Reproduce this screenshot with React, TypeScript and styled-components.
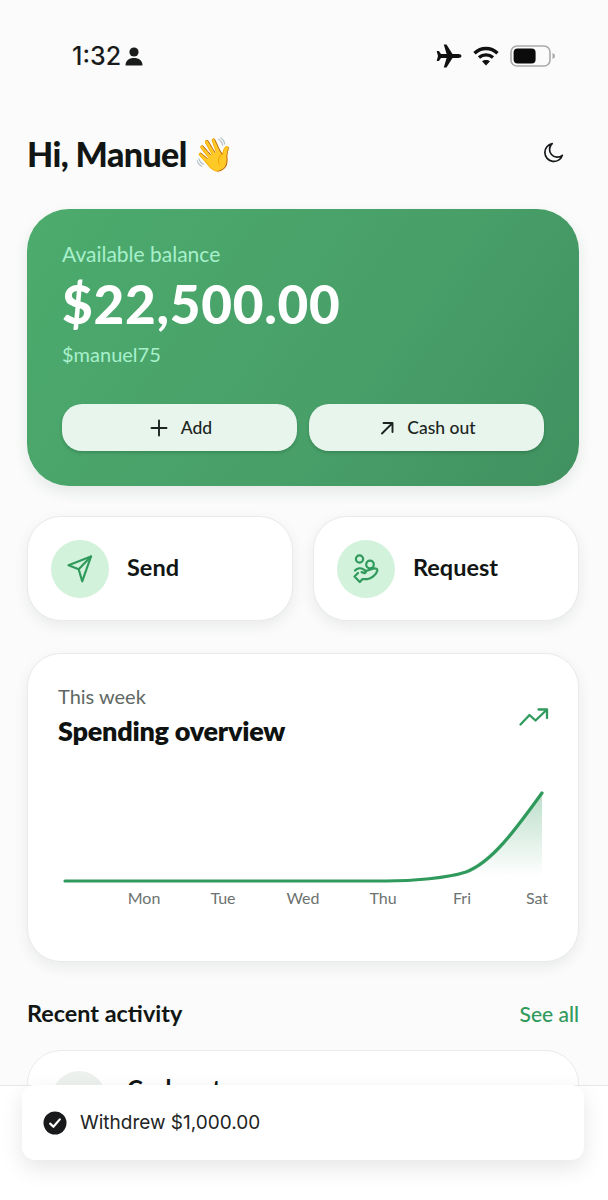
import React from "react";
import styled, { createGlobalStyle } from "styled-components";

const Global = createGlobalStyle`
  html, body { margin: 0; padding: 0; background: #fafbfa; }
  body { width: 608px; height: 1200px; overflow: hidden; font-family: "Lato", "Liberation Sans", sans-serif; color: #111614; }
  * { box-sizing: border-box; }
`;

const Screen = styled.div`
  position: relative;
  width: 608px;
  height: 1200px;
  overflow: hidden;
  background: #fafbfa;
  padding: 0 29px 0 27px;
`;

const StatusBar = styled.div`
  height: 112px;
  display: flex;
  align-items: flex-start;
  justify-content: space-between;
  padding: 41px 23px 0 45px;
`;

const StatusLeft = styled.div`
  display: flex;
  align-items: center;
  gap: 4px;
  font-family: "Inter", sans-serif;
  font-size: 25px;
  line-height: 30px;
  font-weight: 500;
  color: #1a1c1c;
`;

const StatusRight = styled.div`
  display: flex;
  align-items: center;
  gap: 11px;
  height: 30px;
`;

const Header = styled.header`
  height: 82px;
  display: flex;
  align-items: center;
  justify-content: space-between;
  padding-right: 15px;
  margin-bottom: 15px;
`;

const Greeting = styled.h1`
  margin: 0;
  font-size: 34px;
  font-weight: 900;
  letter-spacing: -0.6px;
  color: #111614;
  display: flex;
  align-items: center;
  gap: 6px;
`;

const Emoji = styled.span`
  font-size: 33px;
  line-height: 1;
`;

const BalanceCard = styled.section`
  height: 277px;
  border-radius: 42px;
  padding: 31px 35px 0;
  background: linear-gradient(125deg, #4cab6d 0%, #489f68 60%, #40915f 100%);
  box-shadow: 0 6px 14px rgba(40, 80, 60, 0.1);
`;

const BalanceLabel = styled.div`
  font-size: 21px;
  line-height: 28px;
  font-weight: 400;
  color: #a8f0cc;
`;

const BalanceValue = styled.div`
  margin-top: 1px;
  font-size: 53px;
  line-height: 70px;
  font-weight: 900;
  color: #ffffff;
  letter-spacing: 0.75px;
`;

const Handle = styled.div`
  margin-top: 1px;
  font-size: 20px;
  line-height: 28px;
  font-weight: 400;
  color: #a8f0cc;
`;

const ButtonRow = styled.div`
  display: grid;
  grid-template-columns: 1fr 1fr;
  gap: 12px;
  margin-top: 36px;
`;

const PillButton = styled.button`
  height: 47px;
  border: 0;
  border-radius: 20px;
  background: #e8f5ed;
  box-shadow: 0 2px 3px rgba(20, 70, 40, 0.25);
  display: flex;
  align-items: center;
  justify-content: center;
  gap: 13px;
  font-family: inherit;
  font-size: 17.5px;
  font-weight: 500;
  color: #1c2421;
  padding: 0 0 0 3px;
`;

const QuickGrid = styled.div`
  display: grid;
  grid-template-columns: 266px 266px;
  justify-content: space-between;
  margin-top: 30px;
`;

const QuickCard = styled.div`
  height: 105px;
  border-radius: 34px;
  background: #fff;
  border: 1px solid #e9ebe9;
  box-shadow: 0 5px 14px rgba(40, 50, 45, 0.08);
  display: flex;
  align-items: center;
  gap: 18px;
  padding-left: 23px;
`;

const IconCircle = styled.div`
  width: 58px;
  height: 58px;
  border-radius: 50%;
  background: #d2f2dc;
  display: flex;
  align-items: center;
  justify-content: center;
`;

const QuickLabel = styled.span`
  margin-bottom: 3px;
  font-size: 23.5px;
  font-weight: 700;
  color: #111614;
`;

const ChartCard = styled.section`
  height: 309px;
  margin-top: 32px;
  border-radius: 34px;
  background: #fff;
  border: 1px solid #e9ebe9;
  box-shadow: 0 5px 14px rgba(40, 50, 45, 0.08);
  padding: 28px 29px 0 30px;
`;

const ChartHead = styled.div`
  display: flex;
  justify-content: space-between;
  align-items: center;
`;

const ChartOver = styled.div`
  font-size: 20px;
  line-height: 28px;
  font-weight: 400;
  color: #5f6864;
`;

const ChartTitle = styled.div`
  margin-top: 2px;
  font-size: 27px;
  line-height: 38px;
  font-weight: 800;
  letter-spacing: -0.25px;
  color: #0e1211;
`;

const TrendWrap = styled.div`
  margin-top: 2px;
  line-height: 0;
`;

const ChartSvg = styled.svg`
  display: block;
  margin: 34px 0 0 -30px;
`;

const DayRow = styled.div`
  position: relative;
  height: 24px;
  margin-left: -30px;
`;

const Day = styled.span<{ $x: number }>`
  position: absolute;
  left: ${(p) => p.$x}px;
  top: 0;
  font-size: 16px;
  line-height: 24px;
  color: #6c7270;
  transform: translateX(-50%);
`;

const SectionHead = styled.div`
  display: flex;
  justify-content: space-between;
  align-items: center;
  margin-top: 36px;
  height: 30px;
`;

const SectionTitle = styled.h2`
  margin: 0;
  font-size: 23.4px;
  font-weight: 700;
  color: #111614;
`;

const SeeAll = styled.span`
  font-size: 21px;
  font-weight: 500;
  color: #2f9a5c;
`;

const ActivityCard = styled.div`
  margin-top: 22px;
  height: 130px;
  border-radius: 34px;
  background: #fff;
  border: 1px solid #e9ebe9;
  display: flex;
  gap: 21px;
  padding: 20px 24px;
`;

const ActivityAvatar = styled.div`
  width: 54px;
  height: 54px;
  border-radius: 50%;
  background: #edf1ee;
  flex: none;
`;

const ActivityName = styled.div`
  font-size: 24px;
  font-weight: 700;
  line-height: 28px;
  margin-top: 4px;
`;

const BottomSheet = styled.div`
  position: absolute;
  left: 0;
  right: 0;
  top: 1085px;
  bottom: 0;
  background: #fff;
  border-top: 1px solid #e8eae9;
`;

const Toast = styled.div`
  position: absolute;
  left: 22px;
  top: 1085px;
  width: 562px;
  height: 75px;
  background: #fff;
  border-radius: 13px;
  box-shadow: 0 8px 22px rgba(0, 0, 0, 0.1);
  display: flex;
  align-items: center;
  gap: 13px;
  padding-left: 21px;
  font-family: "Inter", sans-serif;
  font-size: 19px;
  color: #222524;
`;

const Plus = () => (
  <svg width="18" height="18" viewBox="0 0 18 18" fill="none" stroke="#1c2421" strokeWidth="1.9" strokeLinecap="round">
    <path d="M9 1.5v15M1.5 9h15" />
  </svg>
);

const ArrowUR = () => (
  <svg width="14" height="14" viewBox="0 0 14 14" fill="none" stroke="#1c2421" strokeWidth="1.9" strokeLinecap="round" strokeLinejoin="round">
    <path d="M2 12.5 12.5 2M3.5 2h9v9" />
  </svg>
);

const SendIcon = () => (
  <svg width="26" height="28" viewBox="0 0 26 28" fill="none" stroke="#2f9a5c" strokeWidth="2.2" strokeLinejoin="round" strokeLinecap="round">
    <path d="M1.5 10.2 24 1.5 15.2 26.3 11.7 14.2 1.5 10.2Z" />
    <path d="M11.7 14.2 24 1.5" />
  </svg>
);

const RequestIcon = () => (
  <svg width="26" height="30" viewBox="0 0 26 30" fill="none" stroke="#2f9a5c" strokeWidth="2.2" strokeLinejoin="round" strokeLinecap="round">
    <circle cx="6.5" cy="5" r="3.6" />
    <circle cx="17" cy="10.5" r="3.8" />
    <path d="M2 16.5c2.5-2.6 6-2.8 8-1.4l2.3 1.4c1.5 1 .4 3-1.4 2.4l-2.3-.8" />
    <path d="M12.3 17.2 20 14.6c2.8-.9 4.6.6 4.3 2.2-.7 3.3-6 8-10 8.3H9.5L6.8 28 1.5 22.5 5 19" />
  </svg>
);

const TrendIcon = () => (
  <svg width="30" height="18" viewBox="0 0 30 18" fill="none" stroke="#2f9a5c" strokeWidth="2.3" strokeLinecap="round" strokeLinejoin="round">
    <path d="M1.5 16.5 10.5 7l6 5.5L27.5 2" />
    <path d="M19.5 1.5h8.5V10" />
  </svg>
);

const Person = () => (
  <svg width="18" height="19" viewBox="0 0 18 19" fill="#1a1c1c">
    <circle cx="9" cy="5" r="4.6" />
    <path d="M0.5 18.5c0-5 3.4-7.6 8.5-7.6s8.5 2.6 8.5 7.6H0.5Z" />
  </svg>
);

const Plane = () => (
  <svg width="26" height="24" viewBox="0 0 26 24" fill="#111">
    <path d="M25.5 12c0-1.3-1.5-2-3.2-2H16.5L10.5 0.6H7.8L10.6 10H5L2.9 7.1H.7L2 12 .7 16.9h2.2L5 14h5.6L7.8 23.4h2.7l6-9.4h5.8c1.7 0 3.2-.7 3.2-2Z" />
  </svg>
);

const Wifi = () => (
  <svg width="26" height="20" viewBox="0 0 26 20" fill="none" stroke="#111" strokeWidth="3.4">
    <path d="M1.5 7.2C8 .9 18 .9 24.5 7.2" />
    <path d="M6 11.6c4-3.6 10-3.6 14 0" />
    <path d="M13 19.5 9 15.3c2.3-1.9 5.7-1.9 8 0L13 19.5Z" fill="#111" stroke="none" />
  </svg>
);

const Battery = () => (
  <svg width="46" height="22" viewBox="0 0 46 22">
    <rect x="1" y="1" width="39" height="20" rx="6" fill="none" stroke="#a9abab" strokeWidth="1.6" />
    <rect x="3.6" y="3.6" width="22" height="14.8" rx="4" fill="#0b0b0b" />
    <path d="M42.5 8v6c1.5-.6 2.5-1.7 2.5-3s-1-2.4-2.5-3Z" fill="#a9abab" />
  </svg>
);

const Moon = () => (
  <svg width="22" height="22" viewBox="0 0 22 22" fill="none" stroke="#15191a" strokeWidth="1.7" strokeLinejoin="round" strokeLinecap="round">
    <path d="M10.2 1.6A9 9 0 1 0 20.4 13.3 7.2 7.2 0 0 1 10.2 1.6Z" />
  </svg>
);

const Check = () => (
  <svg width="24" height="24" viewBox="0 0 24 24">
    <circle cx="12" cy="12" r="11.5" fill="#17191a" />
    <path d="M7.2 12.6l3.2 3.2 6.4-7.4" fill="none" stroke="#fff" strokeWidth="2.2" strokeLinecap="round" strokeLinejoin="round" />
  </svg>
);

const days: [string, number][] = [
  ["Mon", 116],
  ["Tue", 195],
  ["Wed", 275],
  ["Thu", 355],
  ["Fri", 434],
  ["Sat", 509],
];

export default function App() {
  return (
    <>
      <Global />
      <Screen>
        <StatusBar>
          <StatusLeft>
            1:32
            <Person />
          </StatusLeft>
          <StatusRight>
            <Plane />
            <Wifi />
            <Battery />
          </StatusRight>
        </StatusBar>
        <Header>
          <Greeting>
            Hi, Manuel <Emoji>👋</Emoji>
          </Greeting>
          <Moon />
        </Header>
        <BalanceCard>
          <BalanceLabel>Available balance</BalanceLabel>
          <BalanceValue>$22,500.00</BalanceValue>
          <Handle>$manuel75</Handle>
          <ButtonRow>
            <PillButton>
              <Plus />
              Add
            </PillButton>
            <PillButton>
              <ArrowUR />
              Cash out
            </PillButton>
          </ButtonRow>
        </BalanceCard>
        <QuickGrid>
          <QuickCard>
            <IconCircle>
              <SendIcon />
            </IconCircle>
            <QuickLabel>Send</QuickLabel>
          </QuickCard>
          <QuickCard>
            <IconCircle>
              <RequestIcon />
            </IconCircle>
            <QuickLabel>Request</QuickLabel>
          </QuickCard>
        </QuickGrid>
        <ChartCard>
          <ChartHead>
            <div>
              <ChartOver>This week</ChartOver>
              <ChartTitle>Spending overview</ChartTitle>
            </div>
            <TrendWrap>
              <TrendIcon />
            </TrendWrap>
          </ChartHead>
          <ChartSvg width="530" height="102" viewBox="0 0 530 102">
            <defs>
              <linearGradient id="fill" x1="0" y1="0" x2="0" y2="1">
                <stop offset="0" stopColor="#2f9a5c" stopOpacity="0.32" />
                <stop offset="1" stopColor="#2f9a5c" stopOpacity="0" />
              </linearGradient>
            </defs>
            <path d="M437 85C460 78 490 40 514 10V93H437Z" fill="url(#fill)" />
            <path
              d="M37 97H358C385 97 420 94 438 88C465 78 490 42 514 9"
              fill="none"
              stroke="#2f9a5c"
              strokeWidth="3.2"
              strokeLinecap="round"
            />
          </ChartSvg>
          <DayRow>
            {days.map(([d, x]) => (
              <Day key={d} $x={x}>
                {d}
              </Day>
            ))}
          </DayRow>
        </ChartCard>
        <SectionHead>
          <SectionTitle>Recent activity</SectionTitle>
          <SeeAll>See all</SeeAll>
        </SectionHead>
        <ActivityCard>
          <ActivityAvatar />
          <ActivityName>Cash out</ActivityName>
        </ActivityCard>
        <BottomSheet />
        <Toast>
          <Check />
          Withdrew $1,000.00
        </Toast>
      </Screen>
    </>
  );
}
